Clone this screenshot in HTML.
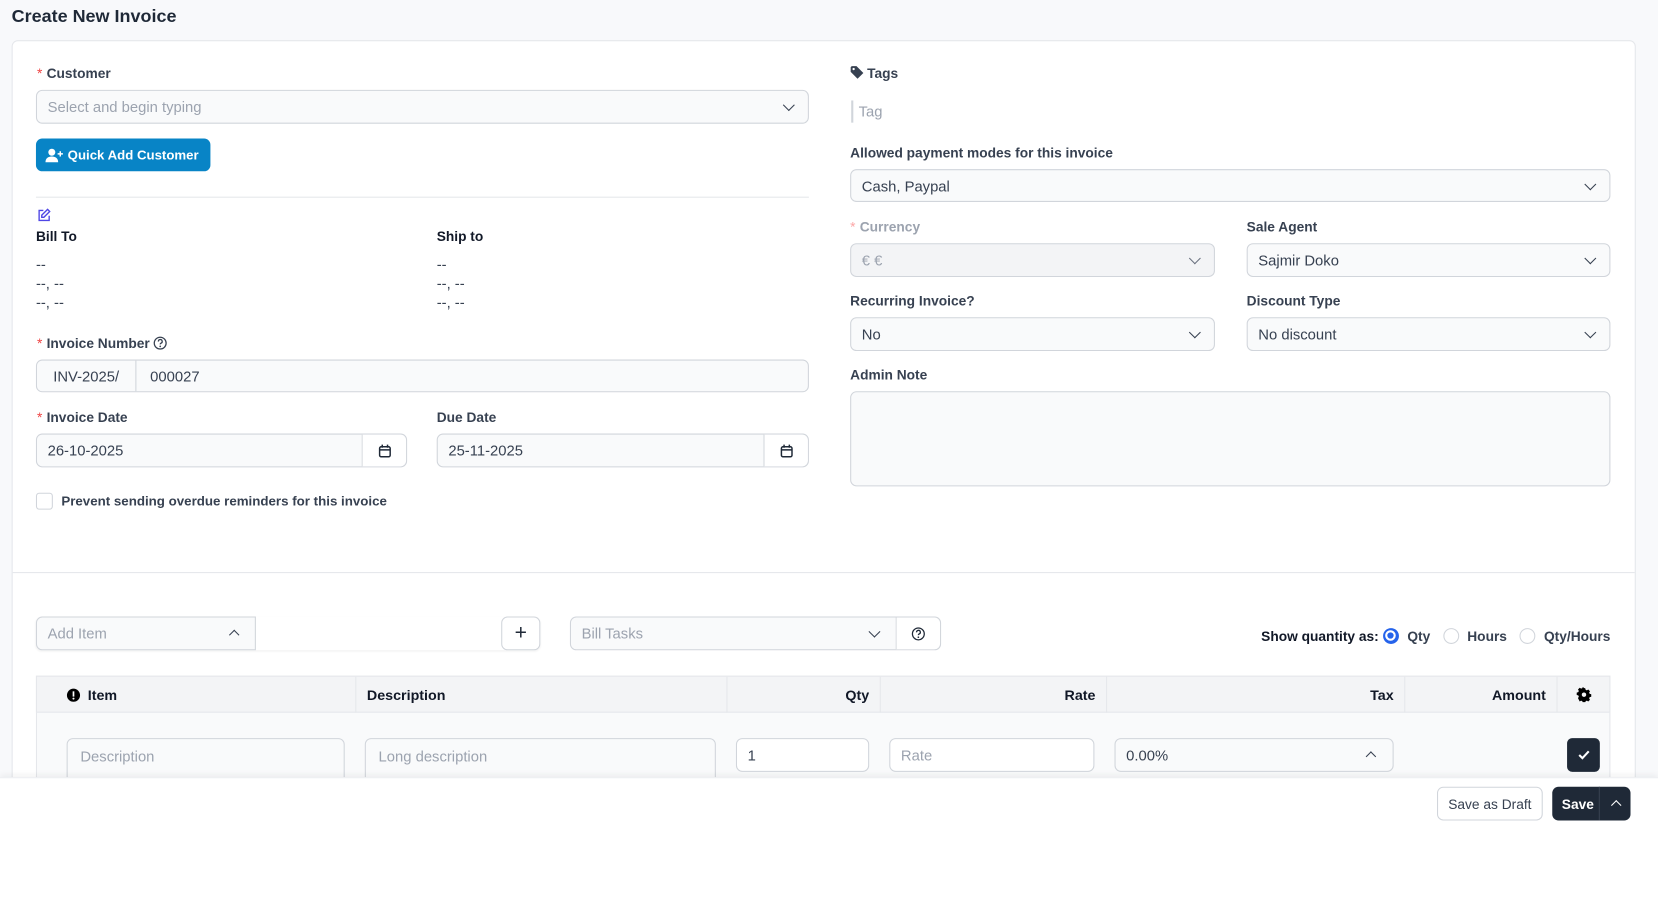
<!DOCTYPE html>
<html><head><meta charset="utf-8"><style>
*{box-sizing:border-box;margin:0;padding:0}
html,body{width:1658px;height:826px;overflow:hidden;background:#f8f9fb;font-family:"Liberation Sans",sans-serif;color:#374151}
#w{position:absolute;left:0;top:0;width:1568px;height:781px;transform:scale(1.05740);transform-origin:0 0}
.a{position:absolute}
.t{font-size:14px;white-space:nowrap;line-height:16px}
.lb{font-size:13px;font-weight:bold;color:#374151;white-space:nowrap}
.lb i{color:#ef4444;font-style:normal;font-weight:normal;margin-right:4px}
.in{position:absolute;border:1px solid #d1d5db;border-radius:6px;background:#f9fafb;font-size:14px;color:#374151;padding-left:10px;display:flex;align-items:center;white-space:nowrap}
.ph{color:#9ca3af}
.chev{position:absolute;right:14px;top:50%;width:8px;height:8px;border-right:1.4px solid #374151;border-bottom:1.4px solid #374151;transform:translateY(-70%) rotate(45deg)}
.chevu{position:absolute;right:14px;top:50%;width:7px;height:7px;border-left:1.3px solid #374151;border-top:1.3px solid #374151;transform:translateY(-30%) rotate(45deg)}
.th{position:absolute;top:0;height:34px;border-right:1px solid #e5e7eb;font-size:13.5px;font-weight:bold;color:#111827;display:flex;align-items:center;padding:0 10px}
</style></head><body><div id="w">
<div class="a" style="left:11px;top:6px;font-size:17px;font-weight:bold;color:#1f2937">Create New Invoice</div>
<div class="a" style="left:11px;top:38px;width:1536px;height:760px;background:#fff;border:1px solid #e5e7eb;border-radius:6px"></div>

<div class="a lb" style="left:35px;top:62px"><i>*</i>Customer</div>
<div class="in" style="left:34px;top:85px;width:731px;height:32px"><span class="ph">Select and begin typing</span><span class="chev"></span></div>
<div class="a" style="left:34px;top:131px;width:165px;height:31px;background:#0884c6;border-radius:6px;color:#fff;font-size:12.5px;font-weight:bold;display:flex;align-items:center;padding-left:9px;white-space:nowrap">
<svg width="18" height="14" viewBox="0 0 18 14" style="margin-right:3px"><circle cx="6" cy="4" r="3.3" fill="#fff"/><path d="M0 13.5c0-4 2.6-5.5 6-5.5s6 1.5 6 5.5z" fill="#fff"/><path d="M14 3v5M11.5 5.5h5" stroke="#fff" stroke-width="1.4"/></svg>Quick Add Customer</div>
<div class="a" style="left:34px;top:186px;width:731px;height:1px;background:#e5e7eb"></div>
<svg class="a" style="left:35px;top:197px" width="13" height="13" viewBox="0 0 13 13" fill="none" stroke="#4f46e5" stroke-width="1.3"><path d="M6 2H2v9.5h9.5V7"/><path d="M10 1l2 2-5.5 5.5H4.5V6.5z"/></svg>
<div class="a lb" style="left:34px;top:216px;color:#111827">Bill To</div>
<div class="a lb" style="left:413px;top:216px;color:#111827">Ship to</div>
<div class="a t" style="left:34px;top:242px;color:#374151">--<br><span style="line-height:20px">--, --</span><br>--, --</div>
<div class="a t" style="left:413px;top:242px;color:#374151">--<br><span style="line-height:20px">--, --</span><br>--, --</div>

<div class="a lb" style="left:35px;top:317px"><i>*</i>Invoice Number <svg width="13" height="13" viewBox="0 0 13 13" style="vertical-align:-2px"><circle cx="6.5" cy="6.5" r="5.6" fill="none" stroke="#374151" stroke-width="1.2"/><path d="M4.8 5a1.8 1.8 0 1 1 2.4 1.6c-.5.2-.7.6-.7 1.1" fill="none" stroke="#374151" stroke-width="1.2"/><circle cx="6.5" cy="9.6" r=".8" fill="#374151"/></svg></div>
<div class="in" style="left:34px;top:340px;width:731px;height:31px;padding-left:0"><span style="width:94px;height:100%;border-right:1px solid #d1d5db;display:flex;align-items:center;justify-content:center">INV-2025/</span><span style="padding-left:13px">000027</span></div>

<div class="a lb" style="left:35px;top:387px"><i>*</i>Invoice Date</div>
<div class="a lb" style="left:413px;top:387px">Due Date</div>
<div class="in" style="left:34px;top:410px;width:351px;height:32px">26-10-2025<span class="a" style="right:0;top:0;width:42px;height:30px;border-left:1px solid #d1d5db;background:#fff;border-radius:0 6px 6px 0;display:flex;align-items:center;justify-content:center"><svg width="12" height="13" viewBox="0 0 12 13" fill="none" stroke="#1f2937" stroke-width="1.4"><rect x="1" y="2.5" width="10" height="9.5" rx="1.5"/><path d="M1 5.5h10M3.5 0.5v3M8.5 0.5v3"/></svg></span></div>
<div class="in" style="left:413px;top:410px;width:352px;height:32px">25-11-2025<span class="a" style="right:0;top:0;width:42px;height:30px;border-left:1px solid #d1d5db;background:#fff;border-radius:0 6px 6px 0;display:flex;align-items:center;justify-content:center"><svg width="12" height="13" viewBox="0 0 12 13" fill="none" stroke="#1f2937" stroke-width="1.4"><rect x="1" y="2.5" width="10" height="9.5" rx="1.5"/><path d="M1 5.5h10M3.5 0.5v3M8.5 0.5v3"/></svg></span></div>
<div class="a" style="left:34px;top:466px;width:16px;height:16px;border:1px solid #d1d5db;border-radius:3px;background:#fff"></div>
<div class="a lb" style="left:58px;top:467px;font-size:12.6px">Prevent sending overdue reminders for this invoice</div>

<div class="a lb" style="left:804px;top:62px"><svg width="13" height="13" viewBox="0 0 13 13" style="vertical-align:-1px;margin-right:3px"><path d="M0.5 1.5V6l6.5 6.5 5.5-5.5L6 0.5H1.5z" fill="#374151"/><circle cx="3.3" cy="3.3" r="1.1" fill="#fff"/></svg>Tags</div>
<div class="a" style="left:805px;top:95px;width:1.5px;height:21px;background:#d1d5db"></div>
<div class="a t" style="left:812px;top:97px;color:#9ca3af">Tag</div>
<div class="a lb" style="left:804px;top:137px">Allowed payment modes for this invoice</div>
<div class="in" style="left:804px;top:160px;width:719px;height:31px">Cash, Paypal<span class="chev"></span></div>
<div class="a lb" style="left:804px;top:207px;color:#9ca3af"><i style="color:#fca5a5">*</i>Currency</div>
<div class="a lb" style="left:1179px;top:207px">Sale Agent</div>
<div class="in" style="left:804px;top:230px;width:345px;height:32px;background:#f3f4f6;color:#9ca3af">€ €<span class="chev" style="border-color:#6b7280"></span></div>
<div class="in" style="left:1179px;top:230px;width:344px;height:32px">Sajmir Doko<span class="chev"></span></div>
<div class="a lb" style="left:804px;top:277px">Recurring Invoice?</div>
<div class="a lb" style="left:1179px;top:277px">Discount Type</div>
<div class="in" style="left:804px;top:300px;width:345px;height:32px">No<span class="chev"></span></div>
<div class="in" style="left:1179px;top:300px;width:344px;height:32px">No discount<span class="chev"></span></div>
<div class="a lb" style="left:804px;top:347px">Admin Note</div>
<div class="in" style="left:804px;top:370px;width:719px;height:90px"></div>

<div class="a" style="left:12px;top:541px;width:1534px;height:1px;background:#e5e7eb"></div>

<div class="a" style="left:34px;top:583px;width:477px;height:32px;border-radius:6px;box-shadow:0 1px 2px rgba(0,0,0,.06)"></div>
<div class="in" style="left:34px;top:583px;width:208px;height:32px;border-radius:6px 0 0 6px"><span class="ph">Add Item</span><span class="chevu" style="right:16px"></span></div>
<div class="a" style="left:474px;top:583px;width:37px;height:32px;border:1px solid #d1d5db;border-radius:6px;background:#fff;font-size:20px;color:#1f2937;display:flex;align-items:center;justify-content:center">+</div>
<div class="in" style="left:539px;top:583px;width:351px;height:32px"><span class="ph">Bill Tasks</span><span class="a" style="right:0;top:0;width:42px;height:30px;border-left:1px solid #d1d5db;background:#fff;border-radius:0 6px 6px 0;display:flex;align-items:center;justify-content:center"><svg width="13" height="13" viewBox="0 0 13 13"><circle cx="6.5" cy="6.5" r="5.6" fill="none" stroke="#1f2937" stroke-width="1.2"/><path d="M4.8 5a1.8 1.8 0 1 1 2.4 1.6c-.5.2-.7.6-.7 1.1" fill="none" stroke="#1f2937" stroke-width="1.2"/><circle cx="6.5" cy="9.6" r=".8" fill="#1f2937"/></svg></span><span class="chev" style="right:58px"></span></div>

<div class="a" style="right:45px;top:592px;font-size:13px;color:#111827;display:flex;align-items:center;white-space:nowrap;height:18px">
<span style="font-weight:bold">Show quantity as:</span>
<span style="width:15px;height:15px;border-radius:50%;background:#2563eb;margin:0 8px 0 4px;display:inline-flex;align-items:center;justify-content:center"><span style="border-radius:50%;background:#2563eb;border:2px solid #fff;box-sizing:content-box;width:6px;height:6px"></span></span><span style="font-weight:bold;color:#374151">Qty</span>
<span style="width:15px;height:15px;border-radius:50%;border:1px solid #d1d5db;margin:0 8px 0 12px"></span><span style="font-weight:bold;color:#374151">Hours</span>
<span style="width:15px;height:15px;border-radius:50%;border:1px solid #d1d5db;margin:0 8px 0 12px"></span><span style="font-weight:bold;color:#374151">Qty/Hours</span></div>

<div class="a" style="left:34px;top:639px;width:1489px;height:160px;border:1px solid #e5e7eb;background:#f9fafb"></div>
<div class="a" style="left:34px;top:639px;width:1489px;height:35px;background:#f3f4f6;border:1px solid #e5e7eb">
<div class="th" style="left:0;width:302px;padding-left:28px"><svg width="13" height="13" viewBox="0 0 13 13" style="margin-right:7px"><circle cx="6.5" cy="6.5" r="6.2" fill="#000"/><rect x="5.7" y="2.8" width="1.6" height="5" fill="#fff"/><circle cx="6.5" cy="9.7" r=".95" fill="#fff"/></svg>Item</div>
<div class="th" style="left:302px;width:351px">Description</div>
<div class="th" style="left:653px;width:145px;justify-content:flex-end">Qty</div>
<div class="th" style="left:798px;width:214px;justify-content:flex-end">Rate</div>
<div class="th" style="left:1012px;width:282px;justify-content:flex-end">Tax</div>
<div class="th" style="left:1294px;width:144px;justify-content:flex-end">Amount</div>
<div class="th" style="left:1438px;width:50px;border-right:0;justify-content:center"><svg width="14" height="14" viewBox="0 0 14 14"><path d="M7 0.5l1.3.2.4 1.7 1.3.6 1.5-.9 1.8 1.8-.9 1.5.6 1.3 1.7.4v2.6l-1.7.4-.6 1.3.9 1.5-1.8 1.8-1.5-.9-1.3.6-.4 1.7H5.7l-.4-1.7-1.3-.6-1.5.9L.7 11.1l.9-1.5-.6-1.3L-.7 7.9V5.3l1.7-.4.6-1.3L.7 2.1 2.5.3 4 1.2l1.3-.6.4-1.7z" fill="#000" transform="translate(.7 .2) scale(.9)"/><circle cx="7" cy="7" r="2.1" fill="#f3f4f6"/></svg></div>
</div>
<div class="in" style="left:63px;top:698px;width:263px;height:50px;align-items:flex-start;padding-top:8px;padding-left:12px"><span class="ph">Description</span></div>
<div class="in" style="left:345px;top:698px;width:332px;height:50px;align-items:flex-start;padding-top:8px;padding-left:12px"><span class="ph">Long description</span></div>
<div class="in" style="left:696px;top:698px;width:126px;height:32px;background:#fff">1</div>
<div class="in" style="left:841px;top:698px;width:194px;height:32px;background:#fff"><span class="ph">Rate</span></div>
<div class="in" style="left:1054px;top:698px;width:264px;height:32px">0.00%<span class="chevu" style="right:17px"></span></div>
<div class="a" style="left:1482px;top:698px;width:31px;height:32px;background:#1f2937;border-radius:5px;display:flex;align-items:center;justify-content:center"><svg width="12" height="10" viewBox="0 0 12 10"><path d="M1.5 5l3 3 6-6.5" fill="none" stroke="#fff" stroke-width="2"/></svg></div>

<div class="a" style="left:0;top:735px;width:1568px;height:120px;background:#fff;box-shadow:0 -2px 6px rgba(0,0,0,.06);border-top:1px solid #eceef1"></div>
<div class="a" style="left:1359px;top:744px;width:100px;height:32px;border:1px solid #d1d5db;border-radius:6px;background:#fff;font-size:13px;color:#374151;display:flex;align-items:center;justify-content:center">Save as Draft</div>
<div class="a" style="left:1468px;top:744px;width:74px;height:32px;background:#1f2937;border-radius:6px;color:#fff;font-size:13px;font-weight:bold;display:flex;align-items:center;padding-left:9px">Save<span class="a" style="left:44px;top:0;width:1px;height:32px;background:#374151"></span><span class="a" style="left:57px;top:14px;width:7px;height:7px;border-left:1.3px solid #fff;border-top:1.3px solid #fff;transform:rotate(45deg)"></span></div>
</div></body></html>
